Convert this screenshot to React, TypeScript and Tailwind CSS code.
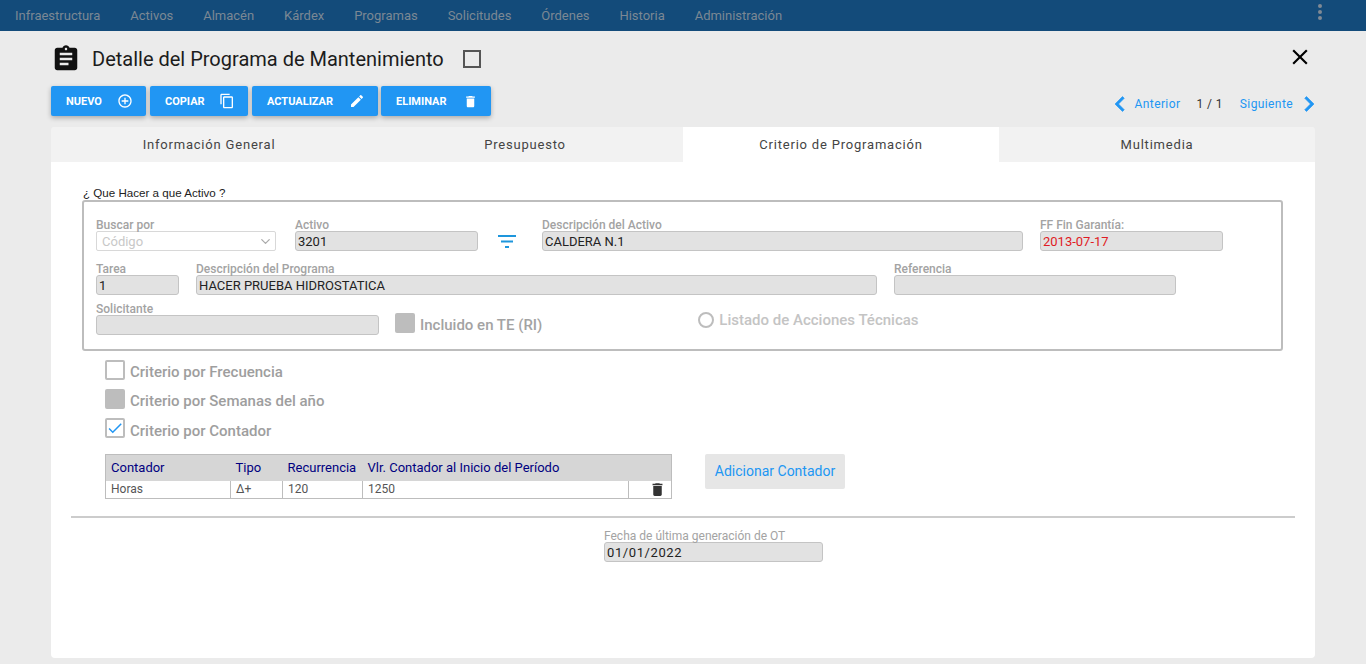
import { ChevronDown } from "lucide-react";

const font = { fontFamily: "Roboto, sans-serif" };

const menu = ["Infraestructura", "Activos", "Almacén", "Kárdex", "Programas", "Solicitudes", "Órdenes", "Historia", "Administración"];

function Icon({ d, size, className }: { d: string; size: number; className?: string }) {
  return (
    <svg width={size} height={size} viewBox="0 0 24 24" fill="currentColor" className={`shrink-0 ${className ?? ""}`}>
      <path d={d} />
    </svg>
  );
}

const icons = {
  assignment:
    "M19 3h-4.180C14.400 1.840 13.300 1 12 1c-1.300 0-2.400.84-2.820 2H5c-1.100 0-2 .9-2 2v14c0 1.100.9 2 2 2h14c1.100 0 2-.9 2-2V5c0-1.100-.9-2-2-2zm-7 0c.55 0 1 .45 1 1s-.45 1-1 1-1-.45-1-1 .45-1 1-1zm2 14H7v-2h7v2zm3-4H7v-2h10v2zm0-4H7V7h10v2z",
  add: "M13 7h-2v4H7v2h4v4h2v-4h4v-2h-4V7zm-1-5C6.480 2 2 6.480 2 12s4.480 10 10 10 10-4.480 10-10S17.520 2 12 2zm0 18c-4.410 0-8-3.590-8-8s3.590-8 8-8 8 3.590 8 8-3.590 8-8 8z",
  copy: "M16 1H4c-1.100 0-2 .9-2 2v14h2V3h12V1zm3 4H8c-1.100 0-2 .9-2 2v14c0 1.100.9 2 2 2h11c1.100 0 2-.9 2-2V7c0-1.100-.9-2-2-2zm0 16H8V7h11v14z",
  edit: "M3 17.250V21h3.750L17.810 9.940l-3.750-3.750L3 17.250zM20.710 7.040c.39-.39.39-1.020 0-1.410l-2.340-2.340c-.39-.39-1.020-.39-1.410 0l-1.830 1.830 3.750 3.750 1.830-1.830z",
  trash: "M6 19c0 1.100.9 2 2 2h8c1.100 0 2-.9 2-2V7H6v12zM19 4h-3.500l-1-1h-5l-1 1H5v2h14V4z",
  close: "M19 6.410L17.590 5 12 10.590 6.410 5 5 6.410 10.590 12 5 17.590 6.410 19 12 13.410 17.590 19 19 17.590 13.410 12z",
  left: "M15.410 7.410L14 6l-6 6 6 6 1.410-1.410L10.830 12z",
  right: "M10 6L8.590 7.410 13.170 12l-4.580 4.590L10 18l6-6z",
  check: "M9 16.170L4.830 12l-1.420 1.410L9 19 21 7l-1.410-1.410z",
};

function Field({ label, value, width, red }: { label: string; value?: string; width: string; red?: boolean }) {
  return (
    <div className={`${width} shrink-0`}>
      <div className="h-[12px] text-[12px] leading-[12px] font-medium text-[#a3a3a3]">{label}</div>
      <div
        className={`h-[20px] w-full rounded-[3px] border border-[#c4c4c4] bg-[#e2e2e2] px-[2px] text-[13px] leading-[19px] ${red ? "text-[#e01b24]" : "text-[#222]"}`}
      >
        {value}
      </div>
    </div>
  );
}

function Criterio({ label, mode }: { label: string; mode: "empty" | "filled" | "checked" }) {
  return (
    <div className="flex h-[20px] items-start gap-[5px]">
      <div
        className={`flex h-[20px] w-[20px] items-center justify-center rounded-[2px] border-2 ${mode === "filled" ? "border-[#bdbdbd] bg-[#bdbdbd]" : "border-[#bdbdbd] bg-white"}`}
      >
        {mode === "checked" && <Icon d={icons.check} size={18} className="text-[#2196f3]" />}
      </div>
      <span className={`${mode === "checked" ? "mt-[3px]" : "mt-[2px]"} text-[15px] leading-[20px] font-medium text-[#9e9e9e]`}>{label}</span>
    </div>
  );
}

function ActionButton({ label, width, icon, size }: { label: string; width: string; icon: string; size: number }) {
  return (
    <button
      className={`${width} flex h-[30px] items-center justify-between rounded-[2px] bg-[#2196f3] pl-[15px] pr-[13px] text-[11px] font-bold text-white shadow-[0_2px_5px_rgba(0,0,0,0.28)]`}
    >
      <span className="pt-[2px]">{label}</span>
      <Icon d={icon} size={size} />
    </button>
  );
}

export default function App() {
  return (
    <div className="h-[664px] w-[1366px] overflow-hidden bg-[#ebebeb]" style={font}>
      <nav className="relative flex h-[31px] items-center gap-[29.900px] bg-[#134b7a] pl-[15px] text-[13px] text-[#7b8894]">
        {menu.map((name) => (
          <span key={name}>{name}</span>
        ))}
        <div className="absolute right-[44px] top-[4px] flex flex-col gap-[2px]">
          <i className="block h-[4px] w-[4px] rounded-full bg-[#808a94]" />
          <i className="block h-[4px] w-[4px] rounded-full bg-[#808a94]" />
          <i className="block h-[4px] w-[4px] rounded-full bg-[#808a94]" />
        </div>
      </nav>

      <div className="mx-[51px] w-[1264px]">
        <div className="flex h-[55px] items-center pt-[1px]">
          <Icon d={icons.assignment} size={30} className="-mt-[1px] text-[#111]" />
          <h1 className="ml-[11px] text-[20px] text-[#1c1c1c]">Detalle del Programa de Mantenimiento</h1>
          <div className="ml-[19px] h-[18px] w-[18px] border-2 border-[#555]" />
          <Icon d={icons.close} size={26} className="ml-auto mr-[2px] -mt-[4px] text-black" />
        </div>

        <div className="flex h-[41px] items-start">
          <div className="flex gap-[4px]">
            <ActionButton label="NUEVO" width="w-[95px]" icon={icons.add} size={16} />
            <ActionButton label="COPIAR" width="w-[98px]" icon={icons.copy} size={16} />
            <ActionButton label="ACTUALIZAR" width="w-[126px]" icon={icons.edit} size={16} />
            <ActionButton label="ELIMINAR" width="w-[110px] -ml-[1px]" icon={icons.trash} size={15} />
          </div>
          <div className="ml-auto mt-[9px] flex h-[18px] items-center text-[12px] tracking-[0.4px] text-[#2196f3]">
            <Icon d={icons.left} size={30} className="stroke-current stroke-[0.5]" />
            <span>Anterior</span>
            <span className="ml-[16px] text-[#333]">1 / 1</span>
            <span className="ml-[17px]">Siguiente</span>
            <Icon d={icons.right} size={30} className="ml-[1px] -mr-[9px] stroke-current stroke-[0.5]" />
          </div>
        </div>

        <div className="grid h-[35px] grid-cols-4 overflow-hidden rounded-t-[3px] bg-[#f2f2f2] text-[13px] tracking-[0.8px] text-[#444]">
          <div className="flex items-center justify-center">Información General</div>
          <div className="flex items-center justify-center">Presupuesto</div>
          <div className="flex items-center justify-center bg-white">Criterio de Programación</div>
          <div className="flex items-center justify-center">Multimedia</div>
        </div>

        <div className="h-[496px] rounded-b-[4px] bg-white px-[20px] pt-[24px]">
          <div className="ml-[12px] h-[14px] text-[11.600px] leading-[14px] text-[#222]" style={{ fontFamily: '"Liberation Sans", sans-serif' }}>
            ¿ Que Hacer a que Activo ?
          </div>
          <section className="ml-[11px] h-[151px] w-[1201px] rounded-[3px] border-2 border-[#bdbdbd] px-[12px] pt-[17px]">
            <div className="flex">
              <div className="w-[180px] shrink-0">
                <div className="h-[12px] text-[12px] leading-[12px] font-medium text-[#a3a3a3]">Buscar por</div>
                <div className="flex h-[20px] items-center justify-between rounded-[2px] border border-[#d8d8d8] bg-white pl-[5px] pr-[2px] pt-[1px] text-[13px] text-[#c8c8c8]">
                  Código
                  <ChevronDown size={15} strokeWidth={2} className="text-[#aaa]" />
                </div>
              </div>
              <Field label="Activo" value="3201" width="w-[183px] ml-[19px]" />
              <svg width="20" height="16" viewBox="0 0 20 16" className="ml-[19px] mt-[15px] shrink-0">
                <path d="M1 2h18M4 7.500h12M8 13h4" stroke="#1e96dc" strokeWidth="2" fill="none" />
              </svg>
              <Field label="Descripción del Activo" value="CALDERA N.1" width="w-[481px] ml-[25px]" />
              <Field label="FF Fin Garantía:" value="2013-07-17" width="w-[183px] ml-[17px]" red />
            </div>
            <div className="mt-[12px] flex">
              <Field label="Tarea" value="1" width="w-[83px]" />
              <Field label="Descripción del Programa" value="HACER PRUEBA HIDROSTATICA" width="w-[681px] ml-[17px]" />
              <Field label="Referencia" width="w-[282px] ml-[17px]" />
            </div>
            <div className="mt-[8px] flex items-start">
              <Field label="Solicitante" width="w-[283px]" />
              <div className="ml-[16px] mt-[10px] h-[20px] w-[20px] rounded-[2px] bg-[#bdbdbd]" />
              <span className="ml-[5px] mt-[12px] text-[15px] leading-[20px] font-medium text-[#a3a3a3]">Incluido en TE (RI)</span>
              <div className="ml-[156px] mt-[9px] h-[16px] w-[16px] rounded-full border-2 border-[#bdbdbd]" />
              <span className="ml-[5px] mt-[7px] text-[15px] leading-[20px] font-medium text-[#c4c4c4]">Listado de Acciones Técnicas</span>
            </div>
          </section>

          <div className="ml-[34px] mt-[9px] flex w-[300px] flex-col gap-[9px]">
            <Criterio label="Criterio por Frecuencia" mode="empty" />
            <Criterio label="Criterio por Semanas del año" mode="filled" />
            <Criterio label="Criterio por Contador" mode="checked" />
          </div>

          <div className="ml-[34px] mt-[16px] flex items-start">
            <table className="w-[567px] table-fixed border-collapse border border-[#bdbdbd] text-[13px]">
              <thead>
                <tr className="h-[26px] bg-[#d6d6d6] text-left text-[#000080]">
                  <th className="w-[125px] px-[5px] font-normal">Contador</th>
                  <th className="w-[52px] px-[5px] font-normal">Tipo</th>
                  <th className="w-[80px] px-[5px] font-normal">Recurrencia</th>
                  <th className="px-[5px] font-normal">Vlr. Contador al Inicio del Período</th>
                  <th className="w-[43px]"></th>
                </tr>
              </thead>
              <tbody>
                <tr className="h-[17px] text-[12px] leading-[15px] text-[#555]">
                  <td className="border-r border-[#bdbdbd] px-[5px]">Horas</td>
                  <td className="border-r border-[#bdbdbd] px-[5px]">Δ+</td>
                  <td className="border-r border-[#bdbdbd] px-[5px]">120</td>
                  <td className="border-r border-[#bdbdbd] px-[5px]">1250</td>
                  <td className="h-[17px] p-0">
                    <Icon d={icons.trash} size={17} className="ml-[20px] text-[#333]" />
                  </td>
                </tr>
              </tbody>
            </table>
            <button className="ml-[33px] h-[35px] w-[140px] rounded-[2px] bg-[#e6e6e6] text-[14px] text-[#2196f3]">
              Adicionar Contador
            </button>
          </div>

          <hr className="mt-[17px] h-[2px] border-0 bg-[#cccccc]" />

          <div className="ml-[533px] mt-[12px] w-[219px]">
            <div className="h-[12px] text-[12px] leading-[12px] text-[#a3a3a3]">Fecha de última generación de OT</div>
            <div className="h-[20px] rounded-[3px] border border-[#c4c4c4] bg-[#e2e2e2] px-[2px] text-[13px] leading-[19px] tracking-[0.6px] text-[#222]">
              01/01/2022
            </div>
          </div>
        </div>
      </div>
    </div>
  );
}
